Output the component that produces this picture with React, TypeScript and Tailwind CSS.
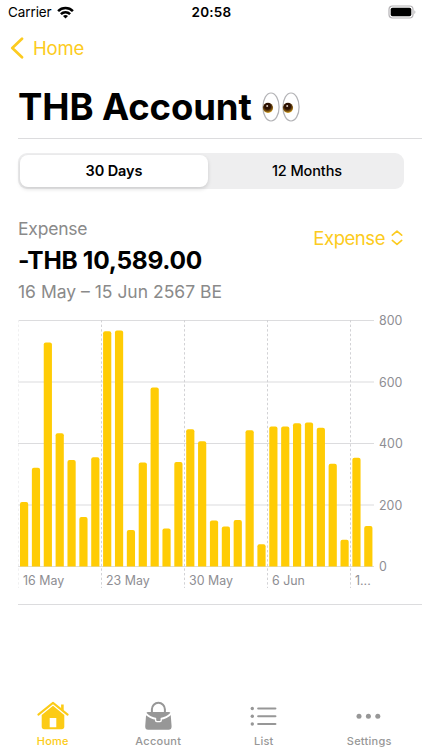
import clsx from "clsx";
import type { ReactNode } from "react";

const BASELINE = 252.6;
const BAR_PITCH = 11.87;
const BAR_WIDTH = 8.2;

// daily totals, 16 May to 14 Jun
const expenses = [
  210, 321, 728, 433, 346, 161, 355, 765, 767, 119, 338, 582, 124, 340, 446, 407, 150, 130, 151, 443, 73, 455, 455,
  466, 468, 451, 334, 87, 354, 132,
];

const gridLines = [
  { value: 800, y: 6.5 },
  { value: 600, y: 68 },
  { value: 400, y: 129.5 },
  { value: 200, y: 191 },
  { value: 0, y: 252.5 },
];

const weeks = [
  { label: "16 May", x: 0.5 },
  { label: "23 May", x: 83.5 },
  { label: "30 May", x: 166.5 },
  { label: "6 Jun", x: 249.5 },
  { label: "1...", x: 332.5 },
];

function barPath(x: number, height: number) {
  const top = BASELINE - height;
  const r = 2;
  return `M${x} ${BASELINE}V${top + r}a${r} ${r} 0 0 1 ${r} ${-r}h${BAR_WIDTH - 2 * r}a${r} ${r} 0 0 1 ${r} ${r}V${BASELINE}Z`;
}

function StatusBar() {
  return (
    <div className="relative flex h-6 items-center justify-between pr-[6px] pl-2">
      <div className="flex items-center gap-[5px]">
        <span className="text-[13.5px] leading-6 tracking-[-0.1px]">Carrier</span>
        <svg width="17" height="13" viewBox="0 0 17 13" fill="none" stroke="#000" strokeWidth="2.5">
          <path d="M1.1 5.1a10.4 10.4 0 0 1 14.8 0" />
          <path d="M3.9 8.2a6.5 6.5 0 0 1 9.2 0" />
          <path d="M8.5 12.6 6 10.1a3.6 3.6 0 0 1 5 0Z" fill="#000" stroke="none" />
        </svg>
      </div>
      <span className="absolute inset-x-0 pl-px text-center text-[13.5px] leading-6 font-semibold tracking-[0.2px]">20:58</span>
      <svg width="28" height="14" viewBox="0 0 28 14">
        <rect x="1" y="1" width="24" height="12" rx="3.4" fill="#fff" stroke="#b5b3b6" strokeWidth="1.2" />
        <rect x="2.7" y="2.7" width="20.6" height="8.6" rx="1.8" fill="#000" />
        <path d="M26.4 5.2v3.7c1.3-.5 1.3-3.2 0-3.7Z" fill="#b5b3b6" />
      </svg>
    </div>
  );
}

function Eye({ uid }: { uid: string }) {
  return (
    <svg width="18" height="30" viewBox="0 0 18 30">
      <defs>
        <radialGradient id={uid} cx="0.45" cy="0.35" r="0.65">
          <stop offset="0.45" stopColor="#2c1203" />
          <stop offset="0.75" stopColor="#79500f" />
          <stop offset="1" stopColor="#d6a327" />
        </radialGradient>
      </defs>
      <ellipse cx="9" cy="15" rx="8.1" ry="14" fill="#fff" stroke="#b3b3b6" strokeWidth="1.2" />
      <circle cx="6" cy="15.8" r="5.1" fill={`url(#${uid})`} />
      <circle cx="5.2" cy="14" r="1" fill="#dccfc6" />
    </svg>
  );
}

function ExpenseChart() {
  return (
    <svg
      width="404"
      height="276"
      viewBox="0 0 404 276"
      className="block"
      fontFamily='Inter, "Liberation Sans", sans-serif'
      fontSize="12.4"
    >
      {gridLines.map(({ value, y }) => (
        <g key={value}>
          <path d={`M0 ${y}H356`} stroke="#dcdcde" strokeWidth="1.2" />
          <text x="360.9" y={y + 4.9} fill="#8e8e93" letterSpacing="0.1">
            {value}
          </text>
        </g>
      ))}
      {weeks.map(({ label, x }, i) => (
        <g key={label}>
          <path d={`M${x} 6V274`} stroke={i === 0 ? "#f0f0f1" : "#d2d2d5"} strokeDasharray="2.4 2.2" />
          <text x={x + 4.5} y="270.6" fill="#8e8e93">
            {label}
          </text>
        </g>
      ))}
      {expenses.map((amount, i) => (
        <path key={i} d={barPath(2 + i * BAR_PITCH, amount * 0.3078)} fill="#ffcc05" />
      ))}
    </svg>
  );
}

function Tab({ label, active, children }: { label: string; active?: boolean; children: ReactNode }) {
  return (
    <div className={clsx("flex flex-1 flex-col items-center", active ? "text-[#fccb16]" : "text-[#979797]")}>
      <svg width="32" height="32" viewBox="0 0 32 32">
        {children}
      </svg>
      <span className="mt-px text-[11px] leading-4 font-medium tracking-[0.25px]">{label}</span>
    </div>
  );
}

function TabBar() {
  return (
    <nav className="flex h-[50px]">
      <Tab label="Home" active>
        <path d="M1.4 14.6 16 2.9l14.6 11.7" fill="none" stroke="currentColor" strokeWidth="2" strokeLinecap="round" strokeLinejoin="round" />
        <path d="M24.1 4.6h2.6v6.2l-2.6-2Z" fill="currentColor" />
        <path
          d="M16 5.7 4.7 14.9v11.9c0 1.500 1 2.400 2.400 2.400h17.800c1.400 0 2.400-.9 2.400-2.400V14.900ZM12.700 18h6.600v9.200h-6.600Z"
          fill="currentColor"
          fillRule="evenodd"
        />
      </Tab>
      <Tab label="Account">
        <path d="M9.9 12.5V9.3a6.5 6.5 0 0 1 13 0v3.2" fill="none" stroke="currentColor" strokeWidth="2" />
        <path d="M5.7 12.1h21.4q1.3 0 1.5 1.5l1 12.7q.1 3.5-3 3.5H6.2q-3.1 0-3-3.5l1-12.7q.2-1.5 1.5-1.5Z" fill="currentColor" />
        <path d="M3 13Q8.4 18.3 14.4 18.9h4Q24.4 18.3 29.8 13" fill="none" stroke="#fff" strokeWidth="1.9" />
        <path d="M12.9 17.9h7v2.6q0 1.8-1.8 1.8h-3.4q-1.8 0-1.8-1.8Z" fill="#fff" />
        <path d="M14.2 17h4.4v2.9q0 1-1 1h-2.4q-1 0-1-1Z" fill="currentColor" />
      </Tab>
      <Tab label="List">
        {[8.5, 16.2, 24].map((y) => (
          <g key={y}>
            <circle cx="4.3" cy={y} r="1.7" fill="currentColor" />
            <path d={`M10.2 ${y}h17.2`} stroke="currentColor" strokeWidth="2.1" strokeLinecap="round" />
          </g>
        ))}
      </Tab>
      <Tab label="Settings">
        <g fill="currentColor">
          <circle cx="6" cy="16.2" r="2.5" />
          <circle cx="15.4" cy="16.2" r="2.5" />
          <circle cx="24.8" cy="16.2" r="2.5" />
        </g>
      </Tab>
    </nav>
  );
}

export default function App() {
  return (
    <div className="flex h-[750px] w-[422px] flex-col overflow-hidden bg-white font-[Inter,'Liberation_Sans',sans-serif] text-black">
      <StatusBar />
      <header className="flex h-12 items-center gap-[9px] pl-[10px] text-[#fccb20]">
        <svg width="14" height="22" viewBox="0 0 14 22" fill="none" stroke="currentColor" strokeWidth="2.7" strokeLinecap="round" strokeLinejoin="round">
          <path d="M12 1.7 2.3 11l9.7 9.3" />
        </svg>
        <span className="text-[18.5px] leading-6 tracking-[-0.15px]">Home</span>
      </header>

      <main className="flex-1 pl-[18px]">
        <div className="flex h-[67px] items-center gap-[10px] border-b border-[#dcdcde] pt-[3px]">
          <h1 className="text-[36.5px] leading-[44px] font-bold tracking-[-0.12px]">THB Account</h1>
          <div className="flex gap-[2px]">
            <Eye uid="eye-left" />
            <Eye uid="eye-right" />
          </div>
        </div>

        <div className="mt-[14px] mr-[18px] flex h-9 rounded-[9px] bg-[#eeeeef] p-[2px] text-[14.5px] leading-8 font-medium">
          <button type="button" className="w-[188px] rounded-[8px] bg-white font-semibold tracking-[-0.1px] shadow-[0_2px_4px_rgba(0,0,0,0.14)]">
            30 Days
          </button>
          <button type="button" className="flex-1 pl-1 tracking-[-0.1px]">
            12 Months
          </button>
        </div>

        <div className="mt-7 mr-[18px] flex items-start justify-between">
          <div>
            <p className="text-[17.5px] leading-6 tracking-[-0.2px] text-[#8a8a8a]">Expense</p>
            <p className="mt-[3px] text-[24.5px] leading-8 font-bold tracking-[-0.28px]">-THB 10,589.00</p>
            <p className="mt-1 text-[17.5px] leading-6 text-[#8a8a8a]">16 May – 15 Jun 2567 BE</p>
          </div>
          <button type="button" className="mt-[9px] flex items-center gap-[6px] pr-px text-[18.5px] leading-6 tracking-[-0.45px] text-[#fccb20]">
            Expense
            <svg width="12" height="16" viewBox="0 0 12 16" fill="none" stroke="currentColor" strokeWidth="1.6" strokeLinecap="round" strokeLinejoin="round">
              <path d="M1.3 5.2 6 1.2l4.7 4M1.3 10.4l4.7 4 4.7-4" />
            </svg>
          </button>
        </div>

        <div className="mt-[10px] h-[291px] border-b border-[#dcdcde]">
          <ExpenseChart />
        </div>
      </main>
      <TabBar />
    </div>
  );
}
